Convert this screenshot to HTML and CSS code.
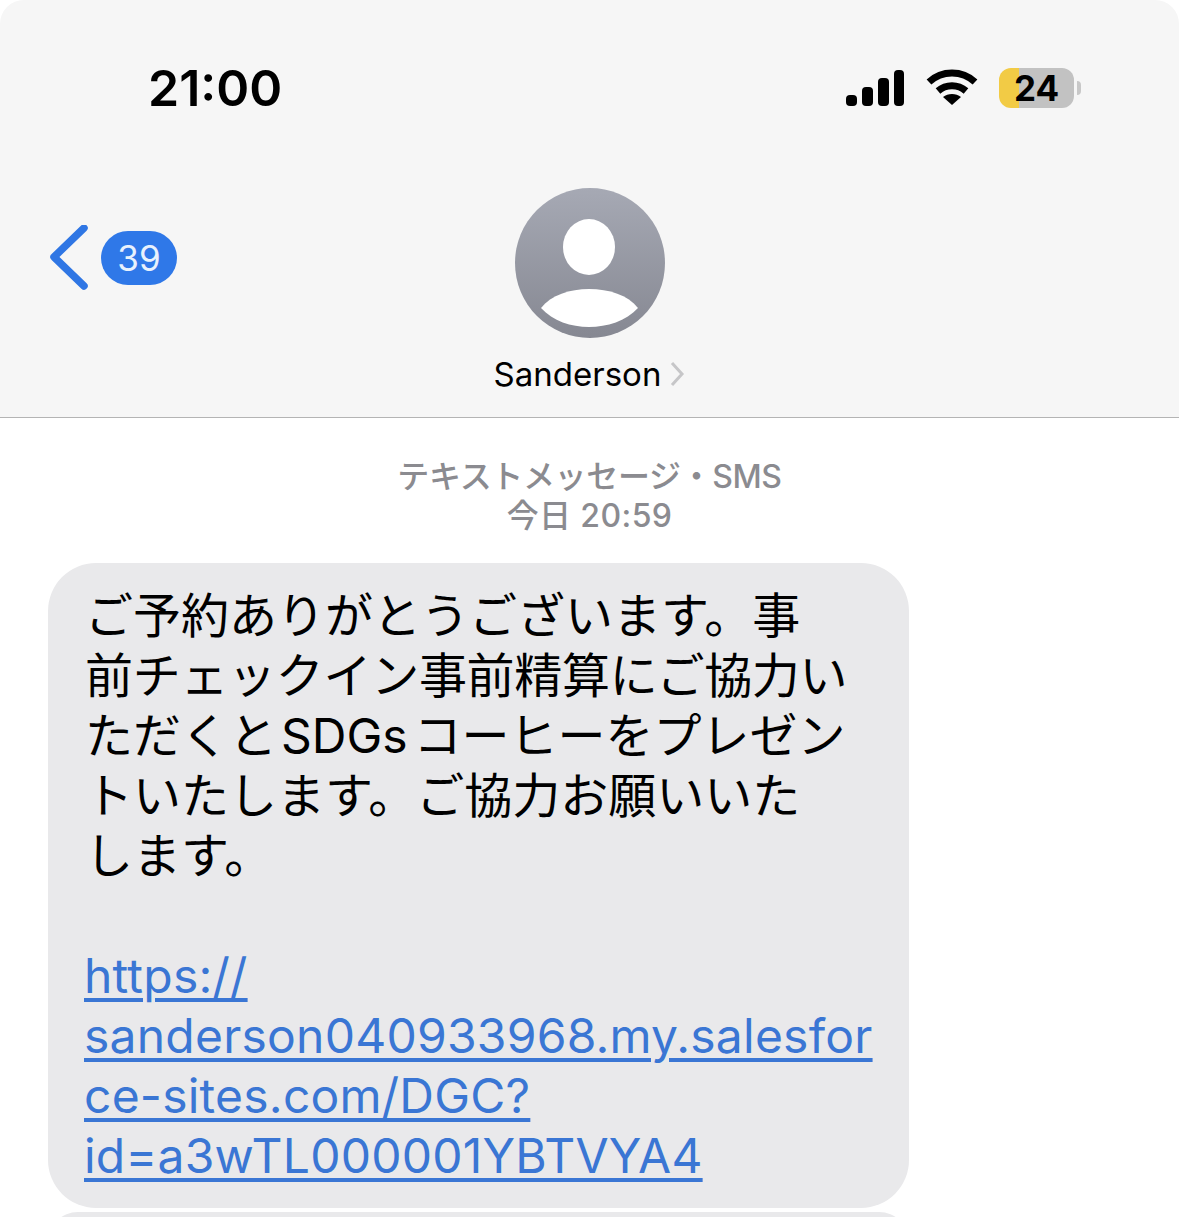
FILE: index.html
```html
<!DOCTYPE html>
<html lang="ja">
<head>
  <meta charset="UTF-8" />
  <meta name="viewport" content="width=device-width, initial-scale=1" />
  <title>Sanderson</title>
  <link rel="stylesheet" href="styles.css">
</head>
<body>
  <header class="top">
    <div class="status">
      <span class="clock">21:00</span>
      <div class="status-icons">
        <svg class="signal" width="60" height="38" viewBox="0 0 60 38">
          <rect x="1" y="26" width="11" height="11" rx="4"/>
          <rect x="17" y="18" width="11" height="19" rx="4"/>
          <rect x="33" y="9" width="11" height="28" rx="4"/>
          <rect x="49" y="1" width="10" height="36" rx="4"/>
        </svg>
        <svg class="wifi" width="52" height="38" viewBox="0 0 52 38">
          <path d="M3 13 C16 1 36 1 49 13" />
          <path d="M12 22 C20 15 32 15 40 22" />
          <path class="wifi-dot" d="M26 36 L17 28 C22 24 30 24 35 28 Z" />
        </svg>
        <div class="battery">
          <div class="battery-body"><span class="battery-level">24</span></div>
          <span class="battery-cap"></span>
        </div>
      </div>
    </div>

    <nav class="nav">
      <div class="back">
        <svg width="40" height="66" viewBox="0 0 40 66">
          <path d="M34 3 L4 32 L34 61" />
        </svg>
        <span class="badge">39</span>
      </div>
      <div class="contact">
        <svg class="avatar" width="150" height="150" viewBox="0 0 150 150">
          <defs>
            <linearGradient id="avatar-fill" x1="0" y1="0" x2="0" y2="1">
              <stop offset="0" stop-color="#a6a9b4"/>
              <stop offset="1" stop-color="#868892"/>
            </linearGradient>
          </defs>
          <circle cx="75" cy="75" r="75" fill="url(#avatar-fill)"/>
          <ellipse cx="74" cy="59" rx="26" ry="28" fill="#fff"/>
          <path d="M26 120 C36 107 55 101 74 101 C94 101 113 107 123 120 C111 133 92 139 74 139 C56 139 38 133 26 120 Z" fill="#fff"/>
        </svg>
        <div class="contact-name">
          <span>Sanderson</span>
          <svg width="16" height="26" viewBox="0 0 16 26">
            <path d="M3 2 L13 13 L3 24" />
          </svg>
        </div>
      </div>
    </nav>
  </header>

  <main class="thread">
    <p class="stamp">
      <span class="stamp-kind">テキストメッセージ・SMS</span>
      <span class="stamp-time">今日 20:59</span>
    </p>

    <div class="bubble">
      <p class="line">ご予約ありがとうございます。事</p>
      <p class="line tight">前チェックイン事前精算にご協力い</p>
      <p class="line">ただくと<span class="latin">SDGs</span>コーヒーをプレゼン</p>
      <p class="line">トいたします。ご協力お願いいた</p>
      <p class="line">します。</p>
      <p class="line">&nbsp;</p>
      <a class="line link" href="#">https://</a>
      <a class="line link" href="#">sanderson040933968.my.salesfor</a>
      <a class="line link" href="#">ce-sites.com/DGC?</a>
      <a class="line link" href="#">id=a3wTL000001YBTVYA4</a>
    </div>
    <div class="bubble-next"></div>
  </main>
</body>
</html>
```

FILE: styles.css
```css
body {
  margin: 0;
  height: 1217px;
  overflow: hidden;
  background: #fff;
  color: #000;
  font-family: Inter, "Noto Sans CJK JP", sans-serif;
}

/* Top bar: status row and contact header */
.top {
  height: 417px;
  background: #f6f6f6;
  border-bottom: 1px solid #b4b4b4;
  border-radius: 24px 24px 0 0;
}

.status {
  display: flex;
  justify-content: space-between;
  align-items: center;
  height: 176px;
  padding: 0 98px 0 148px;
  box-sizing: border-box;
}

.clock {
  font-size: 50px;
  font-weight: 600;
}

.status-icons {
  display: flex;
  align-items: center;
  gap: 21px;
}

.wifi path {
  fill: none;
  stroke: #000;
  stroke-width: 7;
}

.wifi .wifi-dot {
  fill: #000;
  stroke: none;
}

.battery {
  display: flex;
  align-items: center;
  gap: 3px;
}

.battery-body {
  width: 75px;
  height: 40px;
  border-radius: 12px;
  background: linear-gradient(to right, #f2cb45 0 20px, #c2c2c2 20px);
  text-align: center;
}

.battery-level {
  font-size: 35px;
  font-weight: 700;
  line-height: 40px;
}

.battery-cap {
  width: 4px;
  height: 14px;
  border-radius: 0 4px 4px 0;
  background: #c8c8c8;
}

/* Back arrow on the left, contact in the centre */
.nav {
  display: grid;
  grid-template-columns: 1fr 150px 1fr;
  padding-top: 12px;
}

.back {
  display: flex;
  align-items: center;
  align-self: start;
  gap: 11px;
  height: 140px;
  padding-left: 50px;
}

.back svg path {
  fill: none;
  stroke: #2f76e4;
  stroke-width: 7.5;
  stroke-linecap: round;
  stroke-linejoin: round;
}

.badge {
  width: 76px;
  height: 54px;
  border-radius: 27px;
  background: #2f78e8;
  color: #e8f1fd;
  font-size: 35px;
  line-height: 54px;
  text-align: center;
}

.contact {
  grid-column: 2;
  display: flex;
  flex-direction: column;
  align-items: center;
}

.avatar {
  display: block;
}

.contact-name {
  display: flex;
  align-items: center;
  gap: 8px;
  margin-top: 15px;
  white-space: nowrap;
  font-size: 33px;
  line-height: 42px;
}

.contact-name svg path {
  fill: none;
  stroke: #c6c6c8;
  stroke-width: 3;
}

/* Message thread */
.thread {
  padding: 0 0 0 48px;
}

.stamp {
  display: flex;
  flex-direction: column;
  align-items: center;
  margin: 39px 48px 0 0;
  color: #8b8b90;
  font-size: 32px;
  font-weight: 500;
  line-height: 39px;
}

.stamp-kind {
  letter-spacing: -0.35px;
}

.stamp-time {
  letter-spacing: 0.4px;
}

.bubble {
  width: 861px;
  height: 645px;
  box-sizing: border-box;
  margin-top: 28px;
  padding: 23px 0 0 37px;
  border-radius: 48px;
  background: #e9e9eb;
  font-size: 48px;
  line-height: 60px;
}

.line {
  display: block;
  margin: 0;
  white-space: nowrap;
}

.tight {
  letter-spacing: -0.3px;
}

.latin {
  margin: 0 6px 0 4px;
}

.link {
  margin-left: -1px;
  color: #3a76d4;
  letter-spacing: 0.23px;
  text-decoration: underline;
  text-decoration-thickness: 4px;
  text-underline-offset: 5px;
}

.bubble-next {
  width: 861px;
  height: 60px;
  margin-top: 4px;
  border-radius: 48px;
  background: #e9e9eb;
}
```
